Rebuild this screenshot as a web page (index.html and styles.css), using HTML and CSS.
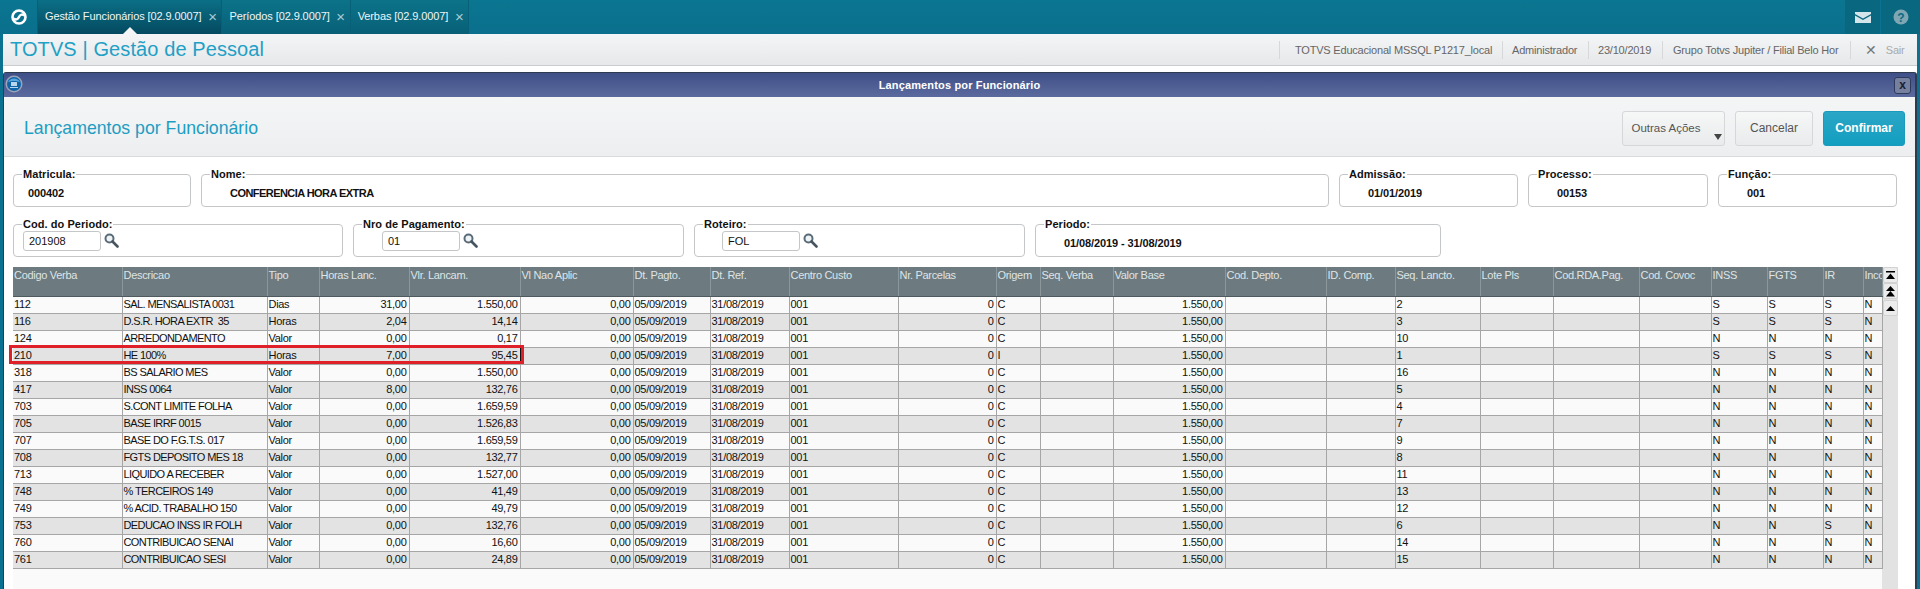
FILE: index.html
```html
<!DOCTYPE html>
<html lang="pt-BR">
<head>
<meta charset="utf-8">
<title>Lançamentos por Funcionário</title>
<link rel="stylesheet" href="styles.css">
</head>
<body>
<header class="topbar">
  <div class="home">
    <svg width="20" height="20" viewBox="0 0 20 20"><circle cx="10" cy="10" r="6.500" fill="none" stroke="#fff" stroke-width="2.600"/><path d="M4.800 11.500C7 13.500 9 12 10 10C11 8 13 6.500 15.200 8.500" fill="none" stroke="#fff" stroke-width="2.400"/></svg>
  </div>
  <div class="tab tab-active"><span>Gestão Funcionários [02.9.0007]</span><i>×</i></div>
  <div class="tab"><span>Períodos [02.9.0007]</span><i>×</i></div>
  <div class="tab"><span>Verbas [02.9.0007]</span><i>×</i></div>
  <div class="spacer"></div>
  <div class="top-icon mail">
    <svg width="16" height="11" viewBox="0 0 16 11"><path d="M0 0H16V2L8 6.500 0 2Z M0 3.500 8 8 16 3.500V11H0Z" fill="#d5e5ea"/></svg>
  </div>
  <div class="top-icon help">
    <svg width="16" height="16" viewBox="0 0 16 16"><circle cx="8" cy="8" r="7.500" fill="#7ea6b3"/><text x="8" y="12.500" text-anchor="middle" class="help-q">?</text></svg>
  </div>
</header>
<div class="page">
  <div class="appbar">
    <h1>TOTVS | Gestão de Pessoal</h1>
    <div class="info info-first">TOTVS Educacional MSSQL P1217_local</div>
    <div class="info info-user">Administrador</div>
    <div class="info info-date">23/10/2019</div>
    <div class="info info-group">Grupo Totvs Jupiter / Filial Belo Hor</div>
    <div class="info info-exit"><b>✕</b><span>Sair</span></div>
  </div>
  <div class="window">
    <div class="titlebar">
      <svg class="win-icon" width="18" height="18" viewBox="0 0 18 18"><circle cx="9" cy="9" r="8.500" fill="#9aa4b8"/><circle cx="9" cy="9" r="7" fill="#0f64a8"/><path d="M3 7A7 7 0 0 1 15 7C12 5.500 6 5.500 3 7Z" fill="#5aa6de"/><path d="M6 7H12V11H6Z M5 12H13V13H5Z" fill="#b9d5ee"/></svg>
      <span class="win-title">Lançamentos por Funcionário</span>
      <span class="win-close">x</span>
    </div>
    <div class="actions">
      <h2>Lançamentos por Funcionário</h2>
      <button class="btn btn-more">Outras Ações<i></i></button>
      <button class="btn btn-cancel">Cancelar</button>
      <button class="btn btn-ok">Confirmar</button>
    </div>
    <div class="form">
      <div class="row row-one">
        <fieldset class="box"><legend>Matricula:</legend><div class="val val-short">000402</div></fieldset>
        <fieldset class="box"><legend>Nome:</legend><div class="val val-caps">CONFERENCIA HORA EXTRA</div></fieldset>
        <fieldset class="box"><legend>Admissão:</legend><div class="val">01/01/2019</div></fieldset>
        <fieldset class="box"><legend>Processo:</legend><div class="val">00153</div></fieldset>
        <fieldset class="box"><legend>Função:</legend><div class="val">001</div></fieldset>
      </div>
      <div class="row row-two">
        <fieldset class="box"><legend>Cod. do Periodo:</legend><div class="lookup lookup-a"><span class="input">201908</span><svg class="lens" width="15" height="15" viewBox="0 0 15 15"><circle cx="5.500" cy="5.500" r="4" fill="#eef3f6" stroke="#5a6b78" stroke-width="2"/><path d="M8.500 8.500 13.500 13.500" stroke="#46555f" stroke-width="2.600" stroke-linecap="round"/></svg></div></fieldset>
        <fieldset class="box"><legend>Nro de Pagamento:</legend><div class="lookup lookup-b"><span class="input">01</span><svg class="lens" width="15" height="15" viewBox="0 0 15 15"><circle cx="5.500" cy="5.500" r="4" fill="#eef3f6" stroke="#5a6b78" stroke-width="2"/><path d="M8.500 8.500 13.500 13.500" stroke="#46555f" stroke-width="2.600" stroke-linecap="round"/></svg></div></fieldset>
        <fieldset class="box"><legend>Roteiro:</legend><div class="lookup lookup-c"><span class="input">FOL</span><svg class="lens" width="15" height="15" viewBox="0 0 15 15"><circle cx="5.500" cy="5.500" r="4" fill="#eef3f6" stroke="#5a6b78" stroke-width="2"/><path d="M8.500 8.500 13.500 13.500" stroke="#46555f" stroke-width="2.600" stroke-linecap="round"/></svg></div></fieldset>
        <fieldset class="box"><legend>Periodo:</legend><div class="val">01/08/2019 - 31/08/2019</div></fieldset>
      </div>
      <div class="grid-wrap">
        <div class="grid-area">
          <table class="grid">
            <colgroup><col><col><col><col><col><col><col><col><col><col><col><col><col><col><col><col><col><col><col><col><col><col><col></colgroup>
            <thead><tr><th>Codigo Verba</th><th>Descricao</th><th>Tipo</th><th>Horas Lanc.</th><th>Vlr. Lancam.</th><th>Vl Nao Aplic</th><th>Dt. Pagto.</th><th>Dt. Ref.</th><th>Centro Custo</th><th>Nr. Parcelas</th><th>Origem</th><th>Seq. Verba</th><th>Valor Base</th><th>Cod. Depto.</th><th>ID. Comp.</th><th>Seq. Lancto.</th><th>Lote Pls</th><th>Cod.RDA.Pag.</th><th>Cod. Covoc</th><th>INSS</th><th>FGTS</th><th>IR</th><th>Incc</th></tr></thead>
            <tbody>
              <tr><td>112</td><td>SAL. MENSALISTA 0031</td><td>Dias</td><td class="n">31,00</td><td class="n">1.550,00</td><td class="n">0,00</td><td>05/09/2019</td><td>31/08/2019</td><td>001</td><td class="n">0</td><td>C</td><td></td><td class="n">1.550,00</td><td></td><td></td><td>2</td><td></td><td></td><td></td><td>S</td><td>S</td><td>S</td><td>N</td></tr>
              <tr><td>116</td><td>D.S.R. HORA EXTR&nbsp; 35</td><td>Horas</td><td class="n">2,04</td><td class="n">14,14</td><td class="n">0,00</td><td>05/09/2019</td><td>31/08/2019</td><td>001</td><td class="n">0</td><td>C</td><td></td><td class="n">1.550,00</td><td></td><td></td><td>3</td><td></td><td></td><td></td><td>S</td><td>S</td><td>S</td><td>N</td></tr>
              <tr><td>124</td><td>ARREDONDAMENTO</td><td>Valor</td><td class="n">0,00</td><td class="n">0,17</td><td class="n">0,00</td><td>05/09/2019</td><td>31/08/2019</td><td>001</td><td class="n">0</td><td>C</td><td></td><td class="n">1.550,00</td><td></td><td></td><td>10</td><td></td><td></td><td></td><td>N</td><td>N</td><td>N</td><td>N</td></tr>
              <tr class="marked"><td>210</td><td>HE 100%</td><td>Horas</td><td class="n">7,00</td><td class="n focus">95,45</td><td class="n">0,00</td><td>05/09/2019</td><td>31/08/2019</td><td>001</td><td class="n">0</td><td>I</td><td></td><td class="n">1.550,00</td><td></td><td></td><td>1</td><td></td><td></td><td></td><td>S</td><td>S</td><td>S</td><td>N</td></tr>
              <tr><td>318</td><td>BS SALARIO MES</td><td>Valor</td><td class="n">0,00</td><td class="n">1.550,00</td><td class="n">0,00</td><td>05/09/2019</td><td>31/08/2019</td><td>001</td><td class="n">0</td><td>C</td><td></td><td class="n">1.550,00</td><td></td><td></td><td>16</td><td></td><td></td><td></td><td>N</td><td>N</td><td>N</td><td>N</td></tr>
              <tr><td>417</td><td>INSS 0064</td><td>Valor</td><td class="n">8,00</td><td class="n">132,76</td><td class="n">0,00</td><td>05/09/2019</td><td>31/08/2019</td><td>001</td><td class="n">0</td><td>C</td><td></td><td class="n">1.550,00</td><td></td><td></td><td>5</td><td></td><td></td><td></td><td>N</td><td>N</td><td>N</td><td>N</td></tr>
              <tr><td>703</td><td>S.CONT LIMITE FOLHA</td><td>Valor</td><td class="n">0,00</td><td class="n">1.659,59</td><td class="n">0,00</td><td>05/09/2019</td><td>31/08/2019</td><td>001</td><td class="n">0</td><td>C</td><td></td><td class="n">1.550,00</td><td></td><td></td><td>4</td><td></td><td></td><td></td><td>N</td><td>N</td><td>N</td><td>N</td></tr>
              <tr><td>705</td><td>BASE IRRF 0015</td><td>Valor</td><td class="n">0,00</td><td class="n">1.526,83</td><td class="n">0,00</td><td>05/09/2019</td><td>31/08/2019</td><td>001</td><td class="n">0</td><td>C</td><td></td><td class="n">1.550,00</td><td></td><td></td><td>7</td><td></td><td></td><td></td><td>N</td><td>N</td><td>N</td><td>N</td></tr>
              <tr><td>707</td><td>BASE DO F.G.T.S. 017</td><td>Valor</td><td class="n">0,00</td><td class="n">1.659,59</td><td class="n">0,00</td><td>05/09/2019</td><td>31/08/2019</td><td>001</td><td class="n">0</td><td>C</td><td></td><td class="n">1.550,00</td><td></td><td></td><td>9</td><td></td><td></td><td></td><td>N</td><td>N</td><td>N</td><td>N</td></tr>
              <tr><td>708</td><td>FGTS DEPOSITO MES 18</td><td>Valor</td><td class="n">0,00</td><td class="n">132,77</td><td class="n">0,00</td><td>05/09/2019</td><td>31/08/2019</td><td>001</td><td class="n">0</td><td>C</td><td></td><td class="n">1.550,00</td><td></td><td></td><td>8</td><td></td><td></td><td></td><td>N</td><td>N</td><td>N</td><td>N</td></tr>
              <tr><td>713</td><td>LIQUIDO A RECEBER</td><td>Valor</td><td class="n">0,00</td><td class="n">1.527,00</td><td class="n">0,00</td><td>05/09/2019</td><td>31/08/2019</td><td>001</td><td class="n">0</td><td>C</td><td></td><td class="n">1.550,00</td><td></td><td></td><td>11</td><td></td><td></td><td></td><td>N</td><td>N</td><td>N</td><td>N</td></tr>
              <tr><td>748</td><td>% TERCEIROS 149</td><td>Valor</td><td class="n">0,00</td><td class="n">41,49</td><td class="n">0,00</td><td>05/09/2019</td><td>31/08/2019</td><td>001</td><td class="n">0</td><td>C</td><td></td><td class="n">1.550,00</td><td></td><td></td><td>13</td><td></td><td></td><td></td><td>N</td><td>N</td><td>N</td><td>N</td></tr>
              <tr><td>749</td><td>% ACID. TRABALHO 150</td><td>Valor</td><td class="n">0,00</td><td class="n">49,79</td><td class="n">0,00</td><td>05/09/2019</td><td>31/08/2019</td><td>001</td><td class="n">0</td><td>C</td><td></td><td class="n">1.550,00</td><td></td><td></td><td>12</td><td></td><td></td><td></td><td>N</td><td>N</td><td>N</td><td>N</td></tr>
              <tr><td>753</td><td>DEDUCAO INSS IR FOLH</td><td>Valor</td><td class="n">0,00</td><td class="n">132,76</td><td class="n">0,00</td><td>05/09/2019</td><td>31/08/2019</td><td>001</td><td class="n">0</td><td>C</td><td></td><td class="n">1.550,00</td><td></td><td></td><td>6</td><td></td><td></td><td></td><td>N</td><td>N</td><td>S</td><td>N</td></tr>
              <tr><td>760</td><td>CONTRIBUICAO SENAI</td><td>Valor</td><td class="n">0,00</td><td class="n">16,60</td><td class="n">0,00</td><td>05/09/2019</td><td>31/08/2019</td><td>001</td><td class="n">0</td><td>C</td><td></td><td class="n">1.550,00</td><td></td><td></td><td>14</td><td></td><td></td><td></td><td>N</td><td>N</td><td>N</td><td>N</td></tr>
              <tr><td>761</td><td>CONTRIBUICAO SESI</td><td>Valor</td><td class="n">0,00</td><td class="n">24,89</td><td class="n">0,00</td><td>05/09/2019</td><td>31/08/2019</td><td>001</td><td class="n">0</td><td>C</td><td></td><td class="n">1.550,00</td><td></td><td></td><td>15</td><td></td><td></td><td></td><td>N</td><td>N</td><td>N</td><td>N</td></tr>
            </tbody>
          </table>
          <div class="redmark"></div>
        </div>
        <div class="scroll">
          <button class="sb"><svg width="9" height="9" viewBox="0 0 9 9"><path d="M0 0H9V1.500H0Z M4.500 2.500 9 8H0Z"/></svg></button>
          <button class="sb"><svg width="9" height="11" viewBox="0 0 9 11"><path d="M4.500 0 9 5H0Z M4.500 5 9 10.500H0Z"/></svg></button>
          <button class="sb sb-last"><svg width="9" height="5" viewBox="0 0 9 5"><path d="M4.500 0 9 5H0Z"/></svg></button>
        </div>
      </div>
    </div>
  </div>
</div>
</body>
</html>
```
FILE: styles.css
```css
* { box-sizing: border-box; }
html, body { margin: 0; height: 589px; overflow: hidden; }
body { background: #0a7290; font-family: "Liberation Sans", Arial, sans-serif; font-size: 12px; color: #111; }
.topbar { height: 34px; display: flex; background: linear-gradient(#0b7691, #0a6f8c); }
.home { width: 38px; display: flex; align-items: center; justify-content: center; border-right: 1px solid #076078; }
.tab { position: relative; display: flex; align-items: center; padding: 0 3px 2px 7px; color: #eef6f8; font-size: 11px; letter-spacing: -0.100px; border-right: 1px solid #075f78; background: linear-gradient(#0b7389, #086078); white-space: nowrap; }
.tab i { font-style: normal; font-size: 15px; color: #a9ccd6; margin-left: 5px; width: 12px; text-align: center; }
.tab-active { padding-right: 2px; background: linear-gradient(#0b6f86, #044a60); }
.tab-active::after { content: ""; position: absolute; left: 85px; bottom: 0; border: 7px solid transparent; border-top: 0; border-bottom-color: #f3f5f6; }
.tab-active + .tab { padding-left: 8px; }
.spacer { flex: 1; }
.top-icon { display: flex; align-items: center; justify-content: center; background: #09677f; }
.mail { width: 36px; border-right: 1px solid #0a7290; }
.help { width: 39px; }
.help-q { font: bold 12px "Liberation Sans", sans-serif; fill: #0b6a84; }
.page { margin: 0 3px; height: 555px; background: #fff; display: flex; flex-direction: column; }
.appbar { height: 32px; flex: none; display: flex; align-items: center; background: linear-gradient(#f4f5f6, #e6e8ea); border-bottom: 1px solid #c9cdcf; color: #666; }
.appbar h1 { margin: 0 auto 0 7px; font-weight: 400; font-size: 20px; letter-spacing: 0.100px; color: #1fa0c6; }
.info { height: 18px; line-height: 18px; border-left: 1px solid #d6d8da; white-space: nowrap; font-size: 11px; letter-spacing: -0.200px; padding: 0 10px; }
.info-first { width: 223px; padding-left: 15px; }
.info-user { width: 86px; padding-left: 9px; }
.info-date { width: 74px; padding-left: 9px; }
.info-group { width: 188px; }
.info-exit { width: 67px; padding-left: 14px; color: #aaa; display: flex; }
.info-exit b { color: #777; font-size: 14px; font-weight: 400; margin-right: 9px; }
.window { margin-top: 6px; flex: 1; min-height: 0; display: flex; flex-direction: column; border: 1px solid #2e3a4e; border-right-width: 2px; border-bottom: 0; border-radius: 3px 3px 0 0; }
.titlebar { position: relative; height: 24px; flex: none; display: flex; align-items: center; justify-content: center; background: linear-gradient(#3f5088, #5c6b9e); color: #fff; }
.win-icon { position: absolute; left: 1px; top: 2px; }
.win-title { font-size: 11px; font-weight: 700; letter-spacing: 0.150px; }
.win-close { position: absolute; right: 4px; top: 4px; width: 17px; height: 17px; line-height: 14px; text-align: center; border: 1px solid #2e3a5c; border-radius: 3px; background: #76809f; color: #1a2030; font-weight: 700; }
.actions { height: 60px; flex: none; display: flex; align-items: center; padding: 3px 10px 0 20px; background: linear-gradient(#f4f6f6, #eceef0); border-bottom: 1px solid #d8dadb; }
.actions h2 { margin: 0 auto 0 0; font-weight: 400; font-size: 17.700px; color: #1e9dc2; }
.btn { height: 35px; margin-left: 10px; font: 12px "Liberation Sans", sans-serif; border-radius: 3px; border: 1px solid #d5d7d8; background: linear-gradient(#f6f7f7, #e9ebec); color: #555; padding: 0; }
.btn-more { position: relative; width: 103px; padding-right: 15px; font-size: 11.500px; }
.btn-more i { position: absolute; right: 2px; bottom: 5px; border: 4.500px solid transparent; border-bottom: 0; border-top: 6px solid #444; }
.btn-cancel { width: 78px; }
.btn-ok { width: 82px; border-color: #1a9abc; background: linear-gradient(#2aa6c6, #139ec0); color: #fff; font-weight: 700; }
.form { flex: 1; min-height: 0; display: flex; flex-direction: column; padding: 10px 16px 0 9px; }
.row { display: grid; height: 40px; gap: 10px; }
.row-one { grid-template-columns: 178px 1128px 179px 180px 179px; }
.row-two { grid-template-columns: 330px 331px 331px 406px; margin-top: 10px; }
.box { margin: 0; padding: 0; min-width: 0; height: 40px; border: 1px solid #c4c6c8; border-radius: 4px; display: flex; align-items: center; }
.box legend { margin-left: 8px; padding: 0 1px; font-size: 11px; font-weight: 700; letter-spacing: 0.050px; line-height: 14px; color: #111; }
.val { padding-left: 28px; font-size: 11px; font-weight: 700; letter-spacing: -0.100px; margin-top: -2px; }
.val-short { padding-left: 14px; }
.val-caps { letter-spacing: -0.550px; }
.lookup { display: flex; align-items: center; gap: 3px; margin-top: -6px; height: 20px; }
.lookup-a { padding-left: 9px; }
.lookup-b { padding-left: 28px; }
.lookup-c { padding-left: 27px; }
.input { width: 78px; height: 20px; line-height: 18px; padding-left: 5px; font-size: 11px; border: 1px solid #c4c6c8; border-radius: 3px; background: #fff; }
.grid-wrap { margin-top: 10px; flex: 1; min-height: 0; display: flex; width: 1885px; }
.grid-area { position: relative; width: 1869px; background: #fafafa; }
.grid { border-collapse: collapse; table-layout: fixed; width: 1869px; font-size: 11px; letter-spacing: -0.300px; }
col:nth-child(1) { width: 109px; } col:nth-child(2) { width: 145px; } col:nth-child(3) { width: 52px; }
col:nth-child(4) { width: 90px; } col:nth-child(5) { width: 111px; } col:nth-child(6) { width: 113px; }
col:nth-child(7) { width: 77px; } col:nth-child(8) { width: 79px; } col:nth-child(9) { width: 109px; }
col:nth-child(10) { width: 98px; } col:nth-child(11) { width: 44px; } col:nth-child(12) { width: 73px; }
col:nth-child(13) { width: 112px; } col:nth-child(14) { width: 101px; } col:nth-child(15) { width: 69px; }
col:nth-child(16) { width: 85px; } col:nth-child(17) { width: 73px; } col:nth-child(18) { width: 86px; }
col:nth-child(19) { width: 72px; } col:nth-child(20) { width: 56px; } col:nth-child(21) { width: 56px; }
col:nth-child(22) { width: 40px; } col:nth-child(23) { width: 19px; }
.grid th { height: 29px; padding: 1px 0 0 1px; font-weight: 400; text-align: left; vertical-align: top; color: #dfe4e6; background: #6d7b80; border-right: 1px solid #8c979b; border-bottom: 1px solid #4e5a5e; white-space: nowrap; overflow: hidden; line-height: 14px; }
.grid td { height: 17px; padding: 0 2px 1px 1px; border-right: 1px solid #a6a6a6; border-bottom: 1px solid #a6a6a6; white-space: nowrap; overflow: hidden; line-height: 15px; background: #fafafa; }
.grid td:nth-child(2) { letter-spacing: -0.600px; }
.grid tbody tr:nth-child(even) td { background: #e3e3e3; }
.grid td.n { text-align: right; }
.grid td.focus { border-left: 1px solid #111; border-right: 1px solid #111; }
.redmark { position: absolute; left: -4px; top: 78px; width: 515px; height: 19px; border: 3px solid #e02028; }
.scroll { width: 16px; background: #e2e2e2; display: flex; flex-direction: column; }
.sb { width: 15px; height: 16px; margin: 0 0 0 1px; padding: 0; display: flex; align-items: center; justify-content: center; background: #ececec; border: 1px solid #d2d2d2; border-radius: 2px; }
.sb-last { margin-top: 1px; }
```
